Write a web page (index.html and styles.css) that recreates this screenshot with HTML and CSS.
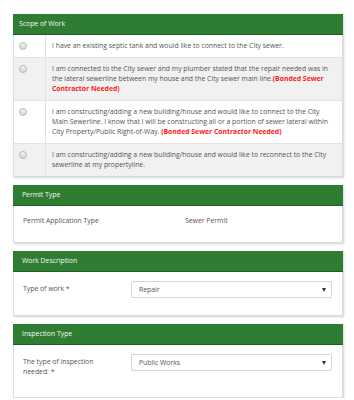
FILE: index.html
```html
<!DOCTYPE html>
<html>
<head>
<meta charset="utf-8">
<link rel="stylesheet" href="styles.css">
</head>
<body>
<div class="page">
  <section class="panel">
    <div class="panel-head head-scope">Scope of Work</div>
    <div class="scope">
      <div class="row">
        <div class="radio-cell"><span class="radio"></span></div>
        <div class="text-cell">I have an existing septic tank and would like to connect to the City sewer.</div>
      </div>
      <div class="row alt">
        <div class="radio-cell"><span class="radio"></span></div>
        <div class="text-cell">I am connected to the City sewer and my plumber stated that the repair needed was in the lateral sewerline between my house and the City sewer main line.<b class="req">(Bonded Sewer Contractor Needed)</b></div>
      </div>
      <div class="row">
        <div class="radio-cell"><span class="radio"></span></div>
        <div class="text-cell">I am constructing/adding a new building/house and would like to connect to the City Main Sewerline. I know that I will be constructing all or a portion of sewer lateral within City Property/Public Right-of-Way. <b class="req">(Bonded Sewer Contractor Needed)</b></div>
      </div>
      <div class="row alt">
        <div class="radio-cell"><span class="radio"></span></div>
        <div class="text-cell">I am constructing/adding a new building/house and would like to reconnect to the City sewerline at my propertyline.</div>
      </div>
    </div>
  </section>

  <section class="panel">
    <div class="panel-head">Permit Type</div>
    <div class="panel-body body-permit">
      <div class="field">
        <div class="label">Permit Application Type</div>
        <div class="value">Sewer Permit</div>
      </div>
    </div>
  </section>

  <section class="panel">
    <div class="panel-head">Work Description</div>
    <div class="panel-body body-form">
      <div class="field">
        <div class="label">Type of work *</div>
        <div class="select"><span>Repair</span><span class="arrow"></span></div>
      </div>
    </div>
  </section>

  <section class="panel">
    <div class="panel-head">Inspection Type</div>
    <div class="panel-body body-form body-insp">
      <div class="field">
        <div class="label">The type of inspection<br>needed: *</div>
        <div class="select"><span>Public Works</span><span class="arrow"></span></div>
      </div>
    </div>
  </section>
</div>
</body>
</html>
```

FILE: styles.css
```css
html, body {
  margin: 0;
  padding: 0;
  background: #ffffff;
}
body {
  font-family: "Open Sans", "Liberation Sans", sans-serif;
  font-size: 6.85px;
  line-height: 10px;
  color: #555555;
}
.page {
  padding: 14px 11px 0 13px;
  display: flex;
  flex-direction: column;
  gap: 8px;
}
.panel {
  border: 1px solid #dcdcdc;
  border-top: none;
  background: #ffffff;
  box-shadow: 1px 1px 2px rgba(0, 0, 0, 0.18);
}
.panel-head {
  background: #2f7d32;
  border-bottom: 1px solid #1f5e22;
  color: #f2f7f2;
  height: 20px;
  line-height: 20px;
  padding-left: 9px;
  margin: 0 -1px;
}
.panel-head.head-scope {
  padding-left: 6px;
}
.scope .row {
  display: flex;
  border-top: 1px solid #e2e2e2;
  background: #ffffff;
}
.scope .row:first-child {
  border-top: none;
}
.scope .row.alt {
  background: #f1f1f1;
}
.radio-cell {
  width: 32px;
  flex: none;
  border-right: 1px solid #e2e2e2;
  padding: 6px 0 0 5px;
  box-sizing: border-box;
}
.radio {
  display: block;
  width: 8px;
  height: 8px;
  border-radius: 50%;
  box-sizing: border-box;
  border: 1px solid #b8b8b8;
  background: linear-gradient(#f4f4f4, #d6d6d6);
  margin-top: 1px;
}
.text-cell {
  padding: 6px 10px 6px 6px;
  flex: 1;
}
.req {
  color: #ff1a1a;
  font-weight: 700;
}
.panel-body {
  padding: 10px 9px 16px 9px;
}
.field {
  display: flex;
  align-items: flex-start;
}
.label {
  width: 108px;
  flex: none;
}
.value {
  padding-left: 54px;
  color: #6e4d5f;
}
.body-form {
  padding: 9px 9px 17px 9px;
}
.body-form .label {
  padding-top: 3px;
}
.select {
  flex: 1;
  height: 17px;
  box-sizing: border-box;
  border: 1px solid #d4d4d4;
  border-radius: 2px;
  display: flex;
  align-items: center;
  justify-content: space-between;
  padding: 0 5px 0 7px;
  margin-right: 1px;
}
.arrow {
  width: 0;
  height: 0;
  border-left: 2.5px solid transparent;
  border-right: 2.5px solid transparent;
  border-top: 4px solid #333;
}
.body-insp {
  padding-bottom: 20px;
}
```
